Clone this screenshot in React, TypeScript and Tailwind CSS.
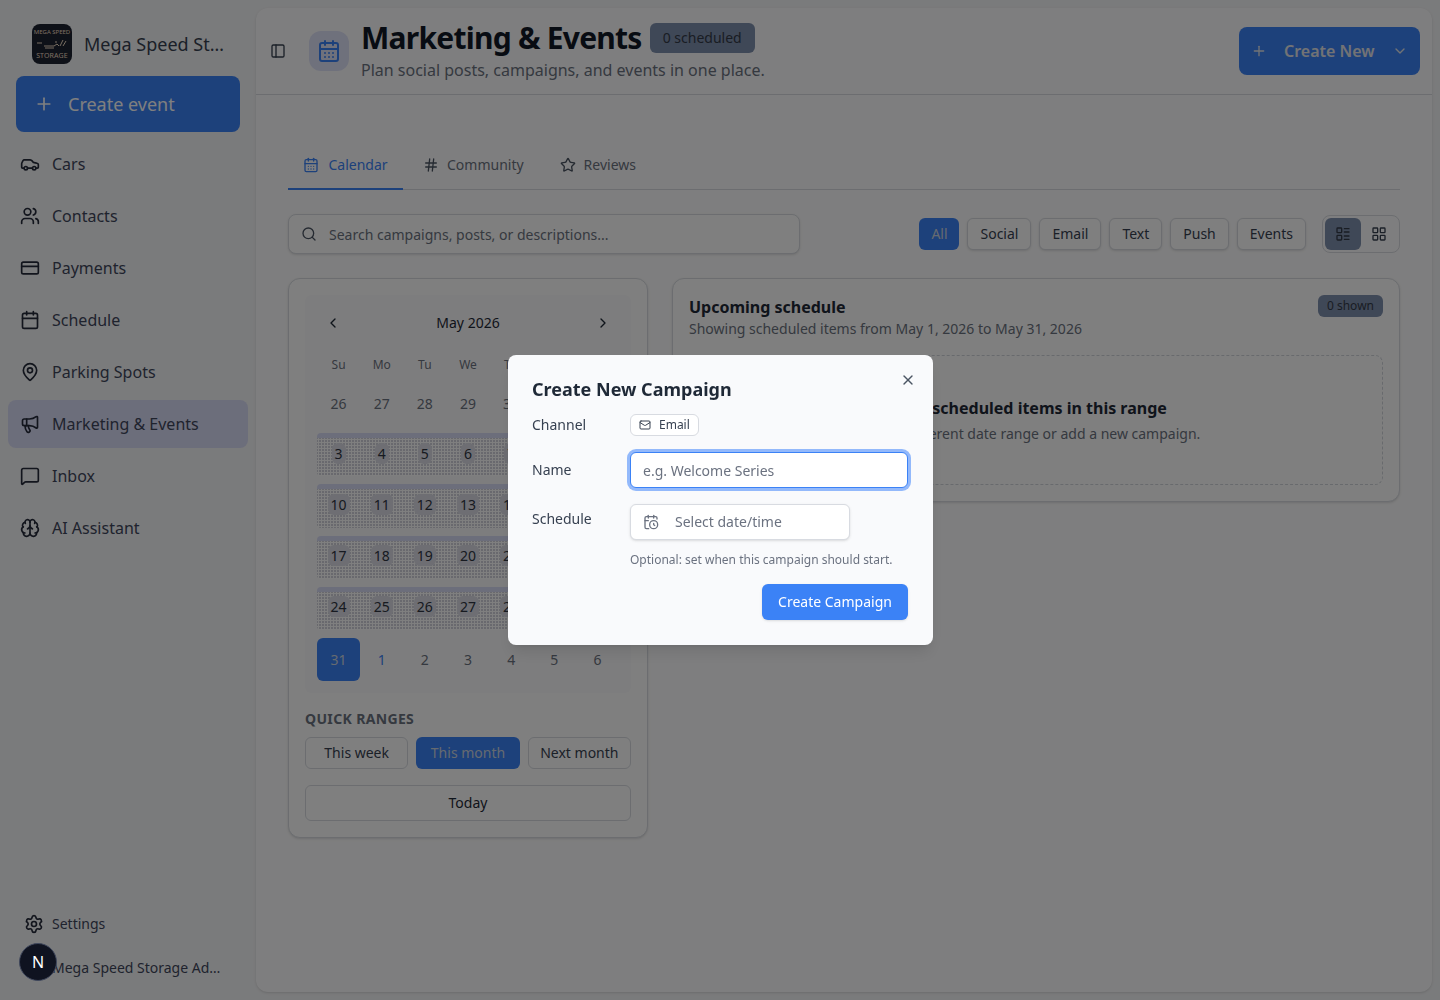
import {
  Brain, Calendar, CalendarClock, CalendarDays, Car, ChevronDown, ChevronLeft, ChevronRight, CreditCard, Hash,
  LayoutGrid, LayoutList, Mail, MapPin, Megaphone, MessageSquare, PanelLeft, Plus, Search, Settings, Star, Users, X,
} from 'lucide-react';

const navItems = [
  { label: 'Cars', icon: Car },
  { label: 'Contacts', icon: Users },
  { label: 'Payments', icon: CreditCard },
  { label: 'Schedule', icon: Calendar },
  { label: 'Parking Spots', icon: MapPin },
  { label: 'Marketing & Events', icon: Megaphone, active: true },
  { label: 'Inbox', icon: MessageSquare },
  { label: 'AI Assistant', icon: Brain },
];

const filters = ['Social', 'Email', 'Text', 'Push', 'Events'];
const weekdays = ['Su', 'Mo', 'Tu', 'We', 'Th', 'Fr', 'Sa'];

const rangeRows = [
  [3, 4, 5, 6, 7, 8, 9],
  [10, 11, 12, 13, 14, 15, 16],
  [17, 18, 19, 20, 21, 22, 23],
  [24, 25, 26, 27, 28, 29, 30],
];

function Logo() {
  return (
    <div className="flex h-10 w-10 shrink-0 flex-col items-center justify-between overflow-hidden rounded-lg bg-[#1c2230] px-0.5 py-[5px] text-[#f0dcc4]">
      <span className="text-[6px] leading-none whitespace-nowrap">MEGA SPEED</span>
      <svg viewBox="0 0 32 12" className="h-3 w-8" fill="none" stroke="currentColor" strokeWidth="1">
        <path d="M1 5h5M8 8h10l3-2 2 2M9 10h9M20 3v2M24 8l3-6M27 8l3-5" />
      </svg>
      <span className="text-[7px] leading-none tracking-[0.02em]">STORAGE</span>
    </div>
  );
}

function Sidebar() {
  return (
    <aside className="flex h-full w-64 shrink-0 flex-col">
      <div className="flex items-center gap-3 pl-8 pr-8 pt-6">
        <Logo />
        <span className="truncate text-lg text-[#374151]">Mega Speed Storage</span>
      </div>
      <div className="px-4 pt-3">
        <button className="flex h-14 w-full items-center gap-[14px] rounded-lg bg-[#3b82f6] px-[18px] text-lg text-white">
          <Plus className="h-5 w-5" />
          Create event
        </button>
      </div>
      <nav className="mt-2 flex flex-col gap-1 px-2">
        {navItems.map((item) => {
          const Icon = item.icon;
          return (
            <div
              key={item.label}
              className={`flex h-12 items-center gap-3 rounded-lg px-3 text-base text-[#3f475c] ${item.active ? 'bg-[#d9dcf7]' : ''}`}
            >
              <Icon className="h-5 w-5 text-[#252b3a]" />
              {item.label}
            </div>
          );
        })}
      </nav>
      <div className="mt-auto pb-[22px]">
        <div className="flex h-11 items-center gap-2 pl-6 text-sm text-[#3f475c]">
          <Settings className="h-5 w-5 text-[#252b3a]" />
          Settings
        </div>
        <div className="truncate pl-[52px] pr-8 pt-3 text-sm text-[#3f475c]">Mega Speed Storage Admin</div>
      </div>
    </aside>
  );
}

function Header() {
  return (
    <header className="flex h-[87px] shrink-0 items-center border-b border-[#d8dbe1] pl-[14px] pr-3">
      <PanelLeft className="h-4 w-4 text-[#374151]" />
      <div className="ml-[23px] flex h-10 w-10 items-center justify-center rounded-xl bg-[#dfe2f8]">
        <CalendarDays className="h-6 w-6 text-[#3b82f6]" />
      </div>
      <div className="ml-3">
        <div className="flex items-center gap-2">
          <h1 className="text-3xl leading-9 font-bold tracking-tight text-[#111827]">Marketing &amp; Events</h1>
          <span className="rounded-md bg-[#7f90ae] px-[13px] py-1 text-sm leading-[22px] text-[#333a48]">0 scheduled</span>
        </div>
        <p className="mt-0.5 text-base leading-6 text-[#6b7280]">Plan social posts, campaigns, and events in one place.</p>
      </div>
      <button className="ml-auto flex h-12 w-[181px] items-center rounded-lg bg-[#3b82f6] px-3 text-base font-semibold text-[#e5e7eb]">
        <Plus className="h-4 w-4" />
        <span className="ml-[17px]">Create New</span>
        <ChevronDown className="ml-auto h-4 w-4" />
      </button>
    </header>
  );
}

function Tabs() {
  return (
    <div className="flex h-12 items-stretch gap-5 border-b border-[#d8dbe1] text-sm">
      <div className="-mb-px flex w-[115px] items-center justify-center gap-[9px] border-b-2 border-[#3b82f6] text-[#3b82f6]">
        <CalendarDays className="h-4 w-4" />
        Calendar
      </div>
      <div className="flex items-center gap-2 pb-[2px] text-[#6b7280]">
        <Hash className="h-4 w-4 text-[#4b5563]" />
        Community
      </div>
      <div className="ml-4 flex items-center gap-2 pb-[2px] text-[#6b7280]">
        <Star className="h-4 w-4 text-[#4b5563]" />
        Reviews
      </div>
    </div>
  );
}

function Toolbar() {
  return (
    <div className="mt-6 flex items-center">
      <div className="flex h-10 w-[512px] items-center gap-3 rounded-lg border border-[#d8dbe1] bg-white px-3 text-sm text-[#6b7280] shadow-sm">
        <Search className="h-4 w-4 text-[#4b5563]" />
        <span className="pt-0.5">Search campaigns, posts, or descriptions...</span>
      </div>
      <div className="ml-auto flex items-center gap-2">
        <button className="h-8 w-10 rounded-md bg-[#3b82f6] text-sm text-[#cbd5e1]">All</button>
        {filters.map((f) => (
          <button key={f} className="h-8 rounded-md border border-[#d8dbe1] bg-white px-3 text-sm text-[#374151] shadow-sm">
            {f}
          </button>
        ))}
        <div className="ml-2 flex h-[38px] w-[78px] items-center rounded-lg border border-[#d8dbe1] p-[2px]">
          <div className="flex h-8 w-9 items-center justify-center rounded-md bg-[#7f90ae]">
            <LayoutList className="h-4 w-4 text-[#333a48]" />
          </div>
          <div className="flex h-8 w-9 items-center justify-center">
            <LayoutGrid className="h-4 w-4 text-[#374151]" />
          </div>
        </div>
      </div>
    </div>
  );
}

function CalendarCard() {
  return (
    <div className="w-[360px] shrink-0 rounded-xl border border-[#d8dbe1] bg-white p-4 shadow-sm">
      <div className="rounded-md bg-[#fbfbfc] p-3">
        <div className="flex h-8 items-center justify-between px-2 text-sm text-[#1f2937]">
          <ChevronLeft className="h-4 w-4" />
          <span>May 2026</span>
          <ChevronRight className="h-4 w-4" />
        </div>
        <div className="mt-4 grid h-5 grid-cols-7 items-center text-center text-xs text-[#6b7280]">
          {weekdays.map((d) => (
            <span key={d}>{d}</span>
          ))}
        </div>
        <div className="mt-[7px] flex flex-col gap-2 text-sm">
          <div className="grid h-[43.2px] grid-cols-7 items-center text-center text-[#6b7280]">
            {[26, 27, 28, 29, 30, 1, 2].map((d) => (
              <span key={d}>{d}</span>
            ))}
          </div>
          {rangeRows.map((row) => (
            <div
              key={row[0]}
              className="grid h-[43.2px] grid-cols-7 items-center overflow-hidden rounded-sm border-t-[5px] border-[#d9dcf7] bg-[radial-gradient(#ffffff_1px,#d2d3dc_1.2px)] bg-[size:3px_3px] text-center text-[#2f3542]"
            >
              {row.map((d) => (
                <span key={d} className="-mt-[7px]">
                  <span className="rounded-md bg-[#dcdde6] px-[3px] py-px">{d}</span>
                </span>
              ))}
            </div>
          ))}
          <div className="grid h-[43.2px] grid-cols-7 items-center text-center text-[#6b7280]">
            <span className="flex h-[43.2px] items-center justify-center rounded-md bg-[#3b82f6] text-[#cbd5e1]">31</span>
            <span className="text-[#3b82f6]">1</span>
            {[2, 3, 4, 5, 6].map((d) => (
              <span key={d}>{d}</span>
            ))}
          </div>
        </div>
      </div>
      <div className="mt-4 text-sm leading-5 font-bold tracking-wide text-[#6b7280]">QUICK RANGES</div>
      <div className="mt-2 grid grid-cols-3 gap-2 text-sm">
        <button className="h-8 rounded-md border border-[#d8dbe1] text-[#374151]">This week</button>
        <button className="h-8 rounded-md bg-[#3b82f6] text-[#cbd5e1]">This month</button>
        <button className="h-8 rounded-md border border-[#d8dbe1] text-[#374151]">Next month</button>
      </div>
      <button className="mt-4 h-9 w-full rounded-md border border-[#d8dbe1] text-sm text-[#1f2937]">Today</button>
    </div>
  );
}

function ScheduleCard() {
  return (
    <div className="h-[224px] flex-1 rounded-xl border border-[#d8dbe1] bg-white px-4 pt-4 shadow-sm">
      <div className="flex items-start justify-between">
        <div>
          <h2 className="text-base leading-6 font-bold text-[#1f2937]">Upcoming schedule</h2>
          <p className="text-sm leading-5 text-[#6b7280]">Showing scheduled items from May 1, 2026 to May 31, 2026</p>
        </div>
        <span className="rounded-md bg-[#7f90ae] px-[9px] py-0.5 text-xs leading-[18px] text-[#333a48]">0 shown</span>
      </div>
      <div className="mt-4 flex h-[130px] flex-col items-center justify-center rounded-lg border border-dashed border-[#d1d5db]">
        <h3 className="text-base leading-6 font-bold text-[#1f2937]">No scheduled items in this range</h3>
        <p className="mt-1 text-sm leading-5 text-[#6b7280]">Try a different date range or add a new campaign.</p>
      </div>
    </div>
  );
}

function CampaignDialog() {
  return (
    <div className="fixed inset-0 z-40 flex items-center justify-center bg-black/50">
      <div className="relative ml-px w-[425px] rounded-lg bg-[#f9fafc] pb-[25px] pl-6 pr-[25px] pt-6 shadow-lg">
        <button className="absolute right-[17px] top-[17px] text-[#4b5563]">
          <X className="h-4 w-4" />
        </button>
        <h2 className="text-lg leading-5 font-bold text-[#1f2937]">Create New Campaign</h2>
        <div className="mt-[15px] grid grid-cols-[98px_1fr] items-center text-sm text-[#374151]">
          <span>Channel</span>
          <span className="flex h-[22px] w-[69px] items-center gap-2 rounded-md border border-[#d8dbe1] bg-white pl-2 text-xs">
            <Mail className="h-3 w-3" />
            Email
          </span>
        </div>
        <div className="mt-4 grid grid-cols-[98px_1fr] items-center text-sm text-[#374151]">
          <span>Name</span>
          <input
            readOnly
            placeholder="e.g. Welcome Series"
            className="h-9 w-full rounded-md border border-[#3b82f6] bg-white px-3 text-sm outline-none ring-[3px] ring-[#93b9fb] placeholder:text-[#6b7280]"
          />
        </div>
        <div className="mt-4 grid grid-cols-[98px_1fr] text-sm text-[#374151]">
          <span className="mt-[5px]">Schedule</span>
          <div>
            <div className="flex h-9 w-[220px] items-center gap-4 rounded-md border border-[#d8dbe1] bg-white px-3 text-[#6b7280] shadow-sm">
              <CalendarClock className="h-4 w-4" />
              Select date/time
            </div>
            <p className="mt-[10px] text-xs leading-5 text-[#6b7280]">Optional: set when this campaign should start.</p>
          </div>
        </div>
        <div className="mt-[14px] flex justify-end">
          <button className="h-9 w-[146px] rounded-md bg-[#3b82f6] text-sm text-white shadow-sm">Create Campaign</button>
        </div>
      </div>
    </div>
  );
}

export default function App() {
  return (
    <div className="flex h-screen w-screen overflow-hidden bg-[#f5f6f8] font-['Noto_Sans',sans-serif]">
      <Sidebar />
      <main className="my-2 mr-2 flex flex-1 flex-col overflow-hidden rounded-xl bg-[#fdfdfe] shadow-sm">
        <Header />
        <div className="flex-1 px-8 pt-[47px]">
          <Tabs />
          <Toolbar />
          <div className="mt-6 flex items-start gap-6">
            <CalendarCard />
            <ScheduleCard />
          </div>
        </div>
      </main>
      <CampaignDialog />
      <div className="fixed bottom-[19px] left-[19px] z-50 flex h-[38px] w-[38px] items-center justify-center rounded-full border border-[#3f475c] bg-[#0f1320] text-base text-white">
        N
      </div>
    </div>
  );
}
